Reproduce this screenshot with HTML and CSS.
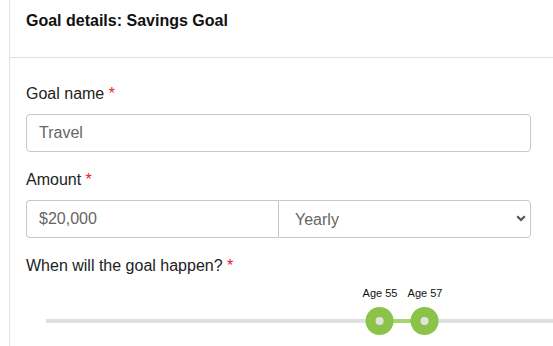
FILE: index.html
```html
<!DOCTYPE html>
<html lang="en">
<head>
<meta charset="utf-8">
<title>Goal details</title>
<link rel="stylesheet" href="styles.css">
</head>
<body>
<div class="panel">
  <div class="panel-header">
    <h3 class="panel-title">Goal details: Savings Goal</h3>
  </div>
  <div class="panel-body">
    <form class="goal-form">
      <div class="form-group">
        <label class="form-label">Goal name <span class="req">*</span></label>
        <input class="form-control" type="text" value="Travel">
      </div>
      <div class="form-group">
        <label class="form-label">Amount <span class="req">*</span></label>
        <div class="input-group">
          <input class="form-control ig-left" type="text" value="$20,000">
          <div class="select-wrap">
            <select class="form-control ig-right">
              <option>Yearly</option>
              <option>Monthly</option>
            </select>
            <svg class="chevron" width="10" height="7" viewBox="0 0 10 7"><path d="M1.2 1.3 L5 5 L8.8 1.3" fill="none" stroke="#555" stroke-width="2.2"/></svg>
          </div>
        </div>
      </div>
      <div class="form-group last">
        <label class="form-label">When will the goal happen? <span class="req">*</span></label>
        <div class="slider">
          <div class="track">
            <div class="range" style="left:334px;width:45px"></div>
            <div class="thumb" style="left:334px">
              <span class="thumb-label">Age 55</span>
              <span class="knob"><span class="knob-dot"></span></span>
            </div>
            <div class="thumb" style="left:379px">
              <span class="thumb-label">Age 57</span>
              <span class="knob"><span class="knob-dot"></span></span>
            </div>
          </div>
        </div>
      </div>
    </form>
  </div>
</div>
</body>
</html>
```
FILE: styles.css
```css
html, body {
  margin: 0;
  padding: 0;
  height: 100%;
  overflow: hidden;
  background: #fff;
}
body {
  font-family: "Liberation Sans", Arial, sans-serif;
  color: #222;
}
.panel {
  box-sizing: border-box;
  height: 100%;
  margin-left: 9px;
  border-left: 1px solid #e3e3e3;
}
.panel-header {
  padding: 11px 16px 26px;
  border-bottom: 1px solid #e0e0e0;
}
.panel-title {
  margin: 0;
  font-size: 16px;
  line-height: 20px;
  font-weight: bold;
  color: #111;
}
.panel-body {
  padding: 25px 0 0 16px;
}
.form-group {
  margin-bottom: 17px;
}
.form-group.last {
  margin-bottom: 0;
}
.form-label {
  display: block;
  font-size: 16px;
  line-height: 22px;
  margin-bottom: 9px;
  color: #222;
}
.req {
  color: #e8202a;
}
.form-control {
  box-sizing: border-box;
  display: block;
  width: 505px;
  height: 38px;
  padding: 0 12px;
  font-family: "Liberation Sans", Arial, sans-serif;
  font-size: 16px;
  color: #666;
  background: #fff;
  border: 1px solid #c8c8c8;
  border-radius: 4px;
  outline: none;
}
.input-group {
  display: flex;
  width: 505px;
}
.input-group .ig-left {
  width: 252px;
  border-radius: 4px 0 0 4px;
  border-right: none;
}
.select-wrap {
  position: relative;
  flex: 1;
}
.ig-right {
  width: 100%;
  appearance: none;
  -webkit-appearance: none;
  padding-left: 16px;
  border-radius: 0 4px 4px 0;
}
.chevron {
  position: absolute;
  right: 5px;
  top: 15px;
  pointer-events: none;
}
.slider {
  margin: 42px 0 0 20px;
  height: 16px;
}
.track {
  position: relative;
  height: 4px;
  background: #e0e0e0;
}
.range {
  position: absolute;
  top: 0;
  height: 4px;
  background: #a6d46d;
}
.thumb {
  position: absolute;
  top: -32px;
  display: flex;
  flex-direction: column;
  align-items: center;
  gap: 7px;
  transform: translateX(-50%);
}
.thumb-label {
  font-size: 11px;
  line-height: 13px;
  color: #111;
  white-space: nowrap;
}
.knob {
  width: 28px;
  height: 28px;
  border-radius: 50%;
  background: #8bc34a;
  display: flex;
  align-items: center;
  justify-content: center;
}
.knob-dot {
  width: 8px;
  height: 8px;
  border-radius: 50%;
  background: #e2e2e2;
}
```
